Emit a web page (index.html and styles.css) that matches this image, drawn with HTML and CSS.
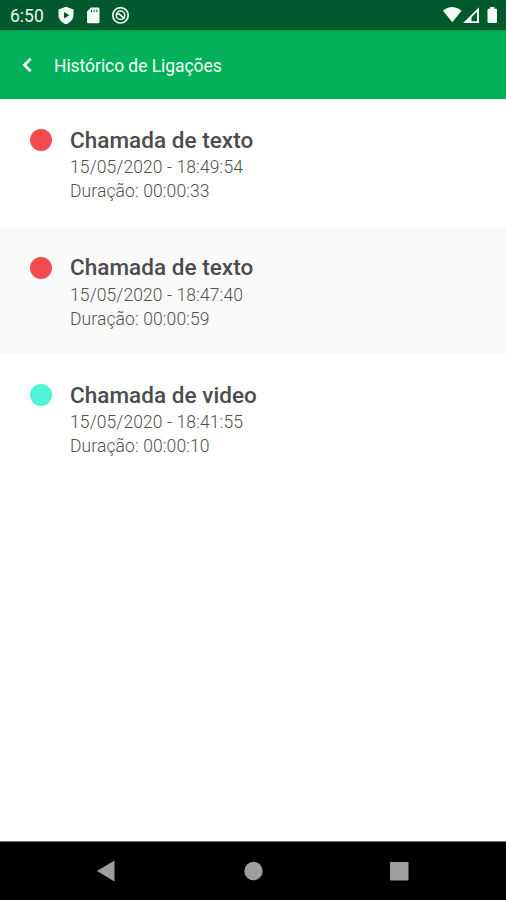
FILE: index.html
```html
<!DOCTYPE html>
<html lang="pt-BR">
<head>
<meta charset="utf-8">
<title>Histórico de Ligações</title>
<link rel="stylesheet" href="styles.css">
</head>
<body>
<div class="screen">
  <div class="status">
    <span class="clock">6:50</span>
    <svg class="status-left" width="74" height="20" viewBox="0 0 74 20">
      <path fill="#f2fbf5" fill-rule="evenodd" d="M8 .8 15.5 3.500V9C15.500 13.500 12 16.800 8 18.300 4 16.800.5 13.500.5 9V3.500ZM6 6v6.400l5.400-3.200Z"/>
      <path fill="#f2fbf5" fill-rule="evenodd" d="M33 1.500h7.200q1.300 0 1.300 1.300v13.200q0 1.300-1.300 1.300H30.300q-1.300 0-1.300-1.300V5.500ZM33 3.800v2.200h1v-2.200ZM35.700 3.800v2.200H36.700v-2.200ZM38.300 3.800v2.200h1v-2.200Z"/>
      <g fill="none" stroke="#f2fbf5"><circle cx="62.500" cy="9.300" r="7.700" stroke-width="1.700"/><circle cx="62.500" cy="9.300" r="4.300" stroke-width="1.500"/><path stroke-width="1.800" d="M58.300 8.500Q60.500 7 62.300 9T67 12.500"/></g>
    </svg>
    <svg class="status-right" width="56" height="18" viewBox="0 0 56 18">
      <path fill="#f2fbf5" d="M0 4.800Q9-2.700 18.500 4.800L9.300 16.200Z"/>
      <path fill="#f2fbf5" fill-rule="evenodd" d="M20 17 36 1.300V17ZM28.500 11.200v4H34V5.800Z"/>
      <path fill="#f2fbf5" d="M47 1h4.500v1.700H53q1 0 1 1v12.300q0 1-1 1h-7.500q-1 0-1-1V3.700q0-1 1-1H47Z"/>
    </svg>
  </div>
  <header class="bar">
    <svg class="back" width="12" height="16" viewBox="0 0 12 16"><path fill="none" stroke="#f4fff8" stroke-width="2.800" d="M9.700 1.700 3.400 8 9.700 14.300"/></svg>
    <h1>Histórico de Ligações</h1>
  </header>
  <main class="list">
    <article class="call first">
      <span class="dot text"></span>
      <div><h2>Chamada de texto</h2><p class="date">15/05/2020 - 18:49:54</p><p class="duration">Duração: 00:00:33</p></div>
    </article>
    <article class="call alt">
      <span class="dot text"></span>
      <div><h2>Chamada de texto</h2><p class="date">15/05/2020 - 18:47:40</p><p class="duration">Duração: 00:00:59</p></div>
    </article>
    <article class="call">
      <span class="dot video"></span>
      <div><h2>Chamada de video</h2><p class="date">15/05/2020 - 18:41:55</p><p class="duration">Duração: 00:00:10</p></div>
    </article>
  </main>
  <nav class="nav">
    <svg width="506" height="58" viewBox="0 0 506 58"><g fill="#9e9e9e"><path d="M97 29 114.500 18.500V39.500Z"/><circle cx="253.500" cy="29" r="9.200"/><rect x="390" y="20" width="18.500" height="18.500" rx="1"/></g></svg>
  </nav>
</div>
</body>
</html>
```
FILE: styles.css
```css
* { box-sizing: border-box; }
body { margin: 0; background: #fff; font-family: Roboto, "Liberation Sans", sans-serif; }
h1, h2, p { margin: 0; white-space: nowrap; }
svg { display: block; flex: none; }
.screen { width: 506px; height: 900px; display: flex; flex-direction: column; overflow: hidden; }
.status { height: 30px; flex: none; background: #00592d; display: flex; align-items: center; padding: 0 8px 0 10px; }
.clock { width: 48px; font-size: 17.5px; line-height: 20px; color: #e9f6ee; padding-top: 2px; }
.status-left { margin-top: 1px; }
.status-right { margin-left: auto; margin-right: -1px; }
.bar { height: 69px; flex: none; background: #02b05a; border-top: 1px solid #009f4d; border-bottom: 1px solid #08a552; display: flex; align-items: center; padding-left: 21px; }
.back { margin-right: 21px; }
h1 { font-size: 17.5px; font-weight: 400; letter-spacing: -0.06px; line-height: 24px; color: #f4fff8; padding-top: 2px; }
.list { flex: 1; }
.call { height: 127px; display: flex; gap: 18px; padding: 26px 0 0 30px; }
.call.first { height: 129px; }
.call.alt { height: 126px; padding-top: 24px; background: #fafafa; }
.call.alt h2 { height: 31px; }
.dot { width: 22px; height: 22px; margin-top: 4px; border-radius: 50%; }
.call.alt .dot { margin-top: 5px; }
.first .dot { margin-top: 4px; }
.dot.text { background: #f34b50; }
.dot.video { background: #50f2d8; }
h2 { font-size: 22.5px; font-weight: 500; letter-spacing: 0.04px; line-height: 30px; color: #4c4c4c; }
.date, .duration { font-size: 17.5px; font-weight: 300; letter-spacing: 0.11px; line-height: 24px; color: #505050; }
.nav { height: 59px; flex: none; background: #000; border-top: 1px solid #777; }
```
